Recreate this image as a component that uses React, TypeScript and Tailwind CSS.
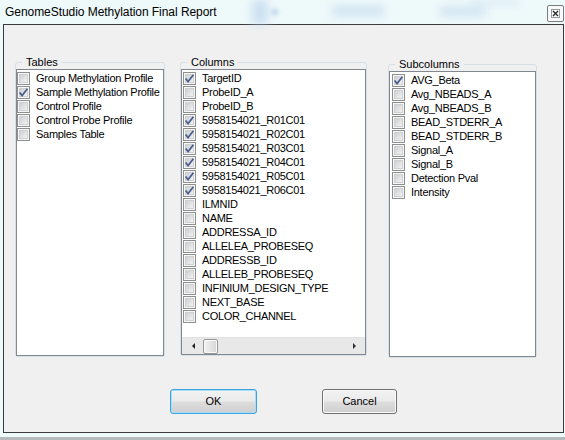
import React from 'react';

const tables = [
  { label: 'Group Methylation Profile', checked: false },
  { label: 'Sample Methylation Profile', checked: true },
  { label: 'Control Profile', checked: false },
  { label: 'Control Probe Profile', checked: false },
  { label: 'Samples Table', checked: false },
];

const columns = [
  { label: 'TargetID', checked: true },
  { label: 'ProbeID_A', checked: false },
  { label: 'ProbeID_B', checked: false },
  { label: '5958154021_R01C01', checked: true },
  { label: '5958154021_R02C01', checked: true },
  { label: '5958154021_R03C01', checked: true },
  { label: '5958154021_R04C01', checked: true },
  { label: '5958154021_R05C01', checked: true },
  { label: '5958154021_R06C01', checked: true },
  { label: 'ILMNID', checked: false },
  { label: 'NAME', checked: false },
  { label: 'ADDRESSA_ID', checked: false },
  { label: 'ALLELEA_PROBESEQ', checked: false },
  { label: 'ADDRESSB_ID', checked: false },
  { label: 'ALLELEB_PROBESEQ', checked: false },
  { label: 'INFINIUM_DESIGN_TYPE', checked: false },
  { label: 'NEXT_BASE', checked: false },
  { label: 'COLOR_CHANNEL', checked: false },
];

const subcolumns = [
  { label: 'AVG_Beta', checked: true },
  { label: 'Avg_NBEADS_A', checked: false },
  { label: 'Avg_NBEADS_B', checked: false },
  { label: 'BEAD_STDERR_A', checked: false },
  { label: 'BEAD_STDERR_B', checked: false },
  { label: 'Signal_A', checked: false },
  { label: 'Signal_B', checked: false },
  { label: 'Detection Pval', checked: false },
  { label: 'Intensity', checked: false },
];

function CheckBox({ checked }: { checked: boolean }) {
  return (
    <svg width="13" height="13" viewBox="0 0 13 13" className="shrink-0">
      <defs>
        <linearGradient id="cb-fill" x1="0" y1="0" x2="1" y2="1">
          <stop offset="0" stopColor="#c9cdd2" />
          <stop offset="1" stopColor="#f4f4f4" />
        </linearGradient>
      </defs>
      <rect x="0.5" y="0.5" width="12" height="12" fill="#f6f6f6" stroke="#8e8f8f" />
      <rect x="2.5" y="2.5" width="8" height="8" fill="url(#cb-fill)" stroke="#d0d0d0" />
      {checked && (
        <path d="M2.6 6.4 L5.1 9.6 L10.4 2.8" fill="none" stroke="#4a5d8f" strokeWidth="1.7" />
      )}
    </svg>
  );
}

type Item = { label: string; checked: boolean };

function CheckList({ items, inset }: { items: Item[]; inset: string }) {
  return (
    <div className={`flex flex-col pt-px ${inset}`}>
      {items.map((item) => (
        <div key={item.label} className="flex items-center h-[14px] gap-[6px]">
          <CheckBox checked={item.checked} />
          <span className="text-[11px] leading-[14px] tracking-[-0.28px] text-black whitespace-nowrap">
            {item.label}
          </span>
        </div>
      ))}
    </div>
  );
}

function Group({
  title,
  className,
  children,
}: {
  title: string;
  className: string;
  children: React.ReactNode;
}) {
  return (
    <fieldset className={`border border-[#d5dfe5] rounded-[3px] min-w-0 shrink-0 ${className}`}>
      <legend className="ml-[6px] px-[4px] text-[11px] leading-[14px] text-black">{title}</legend>
      {children}
    </fieldset>
  );
}

function Button({ label, focused, width }: { label: string; focused?: boolean; width: string }) {
  return (
    <button
      className={`h-[25px] ${width} rounded-[3px] border text-[11px] text-black bg-[linear-gradient(180deg,#f2f2f2_0%,#ebebeb_48%,#dddddd_52%,#cfcfcf_100%)] ${
        focused
          ? 'border-[#3ca4de] shadow-[inset_0_0_0_1px_#a8def6]'
          : 'border-[#707070] shadow-[inset_0_0_0_1px_#fbfbfb]'
      }`}
    >
      {label}
    </button>
  );
}

export default function App() {
  return (
    <div className="w-[565px] h-[440px] bg-[#eef9fa] flex flex-col overflow-hidden font-['Liberation_Sans',Arial,sans-serif]">
      {/* Title bar */}
      <div className="relative h-[24px] flex items-start">
        <div className="absolute left-[252px] top-0 w-[16px] h-[24px] bg-[#bcd5ee] blur-[5px] opacity-70" />
        <div className="absolute left-[272px] top-[9px] w-[6px] h-[6px] bg-[#9fbde0] blur-[2px] opacity-60" />
        <div className="absolute left-[332px] top-[6px] w-[52px] h-[10px] bg-[#c2d8ee] blur-[5px] opacity-70" />
        <div className="absolute left-[440px] top-[7px] w-[46px] h-[9px] bg-[#c2d8ee] blur-[5px] opacity-70" />
        <div className="absolute left-[470px] top-0 w-[50px] h-[5px] bg-[#d0e2f3] blur-[4px] opacity-70" />
        <span className="relative ml-[5px] mt-[4px] text-[12px] leading-[16px] tracking-[-0.05px] text-black whitespace-nowrap">
          GenomeStudio Methylation Final Report
        </span>
        <div className="relative ml-auto mr-[1px] mt-[5px] w-[17px] h-[17px] rounded-[2px] border border-[#7b7b7b] bg-[#f7f9fa] flex items-center justify-center">
          <svg width="9" height="9" viewBox="0 0 9 9">
            <rect x="0.5" y="0.5" width="8" height="8" fill="none" stroke="#9a9a9a" />
            <path d="M2 2 L7 7 M7 2 L2 7" stroke="#2b2b2b" strokeWidth="1.4" />
          </svg>
        </div>
      </div>

      {/* Client area */}
      <div className="ml-[3px] w-[561px] h-[409px] border border-[#3b3b3b] bg-[#f0f0f0] flex flex-col">
        <div className="flex items-start pt-[30px] pl-[11px]">
          <Group title="Tables" className="w-[150px]">
            <div className="h-[287px] border border-[#828790] bg-white">
              <CheckList items={tables} inset="pl-0" />
            </div>
          </Group>

          <Group title="Columns" className="ml-[15px] w-[187px]">
            <div className="h-[286px] border border-[#828790] bg-white flex flex-col">
              <CheckList items={columns} inset="pl-[1px]" />
              {/* Horizontal scrollbar */}
              <div className="mt-auto h-[17px] bg-[#e8e8e8] border-t border-[#e2e2e2] flex items-center">
                <svg width="16" height="16" viewBox="0 0 16 16" className="ml-[4px]">
                  <path d="M6 8 L9 5 L9 11 Z" fill="#202020" />
                </svg>
                <div className="ml-[1px] w-[15px] h-[15px] rounded-[2px] border border-[#979797] bg-[linear-gradient(90deg,#f2f2f2,#e4e4e4_50%,#d6d6d6)] shadow-[inset_0_0_0_1px_#fafafa]" />
                <svg width="16" height="16" viewBox="0 0 16 16" className="ml-auto mr-[3px]">
                  <path d="M7 5 L10 8 L7 11 Z" fill="#303030" />
                </svg>
              </div>
            </div>
          </Group>

          <Group title="Subcolumns" className="ml-[21px] mt-[2px] w-[149px]">
            <div className="h-[286px] border border-[#828790] bg-white">
              <CheckList items={subcolumns} inset="pl-[2px]" />
            </div>
          </Group>
        </div>

        <div className="mt-auto mb-[18px] ml-[166px] flex gap-[65px]">
          <Button label="OK" focused width="w-[87px]" />
          <Button label="Cancel" width="w-[75px]" />
        </div>
      </div>

      <div className="h-[4px] bg-[#eef9fa]" />
      <div className="flex-1 bg-[#b5babd]" />
    </div>
  );
}
